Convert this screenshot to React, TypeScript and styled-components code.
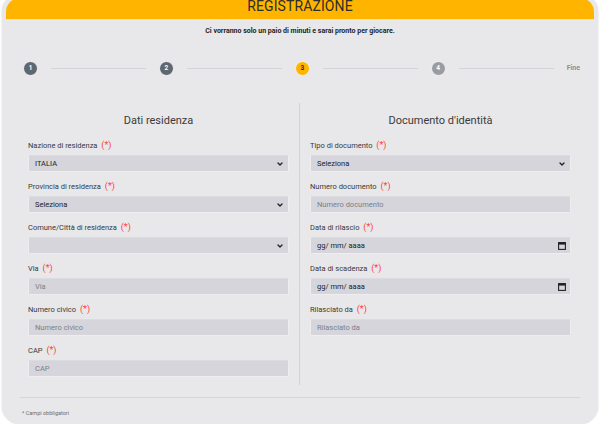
import React from "react";
import styled, { createGlobalStyle } from "styled-components";
import { ChevronDown } from "lucide-react";

const GlobalStyle = createGlobalStyle`
  html, body {
    margin: 0;
    padding: 0;
    background: #ffffff;
    font-family: Roboto, "Liberation Sans", sans-serif;
    overflow: hidden;
  }
  * { box-sizing: border-box; }
`;

type Step = { label: string; state: "done" | "active" | "todo" };

const steps: Step[] = [
  { label: "1", state: "done" },
  { label: "2", state: "done" },
  { label: "3", state: "active" },
  { label: "4", state: "todo" }
];

type Field = {
  label: string;
  kind: "select" | "text" | "date";
  value?: string;
  placeholder?: string;
};

const residenza: Field[] = [
  { label: "Nazione di residenza", kind: "select", value: "ITALIA" },
  { label: "Provincia di residenza", kind: "select", value: "Seleziona" },
  { label: "Comune/Città di residenza", kind: "select", value: "" },
  { label: "Via", kind: "text", placeholder: "Via" },
  { label: "Numero civico", kind: "text", placeholder: "Numero civico" },
  { label: "CAP", kind: "text", placeholder: "CAP" }
];

const documento: Field[] = [
  { label: "Tipo di documento", kind: "select", value: "Seleziona" },
  { label: "Numero documento", kind: "text", placeholder: "Numero documento" },
  { label: "Data di rilascio", kind: "date" },
  { label: "Data di scadenza", kind: "date" },
  { label: "Rilasciato da", kind: "text", placeholder: "Rilasciato da" }
];

const CalendarIcon = () => (
  <svg width="8" height="8" viewBox="0 0 8 8">
    <rect x="0.6" y="0.6" width="6.8" height="6.8" fill="none" stroke="#222" strokeWidth="1.1" />
    <rect x="0.6" y="0.6" width="6.8" height="2" fill="#222" />
  </svg>
);

const FormField = ({ field }: { field: Field }) => (
  <FieldBox>
    <Label>
      {field.label} <Required>(*)</Required>
    </Label>
    <InputWrap>
      {field.kind === "select" && (
        <>
          <SelectBox defaultValue={field.value}>
            <option value={field.value}>{field.value}</option>
          </SelectBox>
          <IconSlot>
            <ChevronDown size={8} strokeWidth={4} color="#222" />
          </IconSlot>
        </>
      )}
      {field.kind === "text" && <TextBox placeholder={field.placeholder} />}
      {field.kind === "date" && (
        <>
          <TextBox readOnly defaultValue="gg/ mm/ aaaa" $dark />
          <IconSlot>
            <CalendarIcon />
          </IconSlot>
        </>
      )}
    </InputWrap>
  </FieldBox>
);

export default function App() {
  return (
    <>
      <GlobalStyle />
      <Card>
        <Header>
          <Title>REGISTRAZIONE</Title>
        </Header>
        <Subtitle>Ci vorranno solo un paio di minuti e sarai pronto per giocare.</Subtitle>
        <Stepper>
          {steps.map((s) => (
            <React.Fragment key={s.label}>
              <StepDot $state={s.state}>{s.label}</StepDot>
              <StepLine />
            </React.Fragment>
          ))}
          <StepEnd>Fine</StepEnd>
        </Stepper>
        <Columns>
          <Column>
            <ColumnTitle>Dati residenza</ColumnTitle>
            {residenza.map((f) => (
              <FormField key={f.label} field={f} />
            ))}
          </Column>
          <Divider />
          <Column>
            <ColumnTitle>Documento d'identità</ColumnTitle>
            {documento.map((f) => (
              <FormField key={f.label} field={f} />
            ))}
          </Column>
        </Columns>
        <Footer>* Campi obbligatori</Footer>
      </Card>
    </>
  );
}

const Card = styled.div`
  margin: -6px 2px 0 2px;
  height: 430px;
  padding: 4px;
  background: #e8e8ea;
  border-radius: 18px;
  box-shadow: 0 0 2px rgba(0, 0, 0, 0.18);
`;

const Header = styled.header`
  height: 22px;
  background: #ffb400;
  border-radius: 14px 14px 0 0;
  border-bottom: 1px solid #f1e3c0;
  display: flex;
  justify-content: center;
  align-items: flex-start;
`;

const Title = styled.h1`
  margin: 1px 0 0;
  font-size: 14px;
  line-height: 14px;
  font-weight: 400;
  color: #2e2e2e;
  letter-spacing: 0.1px;
`;

const Subtitle = styled.p`
  margin: 7px 0 0;
  text-align: center;
  font-size: 7px;
  line-height: 9px;
  font-weight: 700;
  color: #1f1f1f;
`;

const Stepper = styled.div`
  display: flex;
  align-items: center;
  margin: 24px 14px 0 17px;
  height: 16px;
`;

const dotColors = {
  done: { bg: "#5f6870", fg: "#ffffff" },
  active: { bg: "#ffb400", fg: "#2b2b2b" },
  todo: { bg: "#9a9ca2", fg: "#ffffff" }
};

const StepDot = styled.div<{ $state: Step["state"] }>`
  width: 15px;
  height: 15px;
  flex: none;
  border-radius: 50%;
  border: 1px solid #f4f4f5;
  background: ${(p) => dotColors[p.$state].bg};
  color: ${(p) => dotColors[p.$state].fg};
  font-size: 6.5px;
  font-weight: 700;
  display: flex;
  align-items: center;
  justify-content: center;
`;

const StepLine = styled.div`
  flex: 1;
  height: 1px;
  margin: 0 13px;
  background: #d3d3d7;
`;

const StepEnd = styled.span`
  font-size: 7px;
  font-weight: 700;
  color: #8d9096;
`;

const Columns = styled.div`
  display: grid;
  grid-template-columns: 1fr 1px 1fr;
  column-gap: 10px;
  margin: 27px 23px 0 22px;
`;

const Column = styled.section`
  padding: 10px 0 8px;
  display: flex;
  flex-direction: column;
`;

const Divider = styled.div`
  background: #d2d2d6;
`;

const ColumnTitle = styled.h2`
  margin: 0 0 11px;
  text-align: center;
  font-size: 11px;
  line-height: 16px;
  font-weight: 400;
  color: #3a3a3a;
`;

const FieldBox = styled.div`
  display: flex;
  flex-direction: column;
  gap: 5px;
  margin-bottom: 9px;
  &:last-child {
    margin-bottom: 0;
  }
`;

const Label = styled.label`
  display: block;
  height: 10px;
  font-size: 7.5px;
  line-height: 10px;
  color: #383838;
`;

const Required = styled.span`
  color: #ff3b3b;
  font-size: 9px;
  line-height: 10px;
  margin-left: 2px;
`;

const InputWrap = styled.div`
  position: relative;
  height: 17px;
`;

const fieldCss = `
  display: block;
  width: 100%;
  height: 100%;
  border: 1px solid #eeeef1;
  border-top-color: #dcdce0;
  border-radius: 2px;
  background: #d5d5db;
  padding: 0 6px;
  font-family: Roboto, "Liberation Sans", sans-serif;
  font-size: 7.5px;
  outline: none;
`;

const SelectBox = styled.select`
  ${fieldCss}
  appearance: none;
  color: #222;
`;

const TextBox = styled.input<{ $dark?: boolean }>`
  ${fieldCss}
  color: ${(p) => (p.$dark ? "#222" : "#7c8087")};
  &::placeholder {
    color: #7c8087;
  }
`;

const IconSlot = styled.span`
  position: absolute;
  right: 5px;
  top: 50%;
  transform: translateY(-50%);
  display: flex;
  pointer-events: none;
`;

const Footer = styled.footer`
  margin: 12px 14px 0 14px;
  border-top: 1px solid #d6d6da;
  padding: 11px 0 0 2px;
  font-size: 5.5px;
  line-height: 8px;
  color: #6a6d72;
`;
